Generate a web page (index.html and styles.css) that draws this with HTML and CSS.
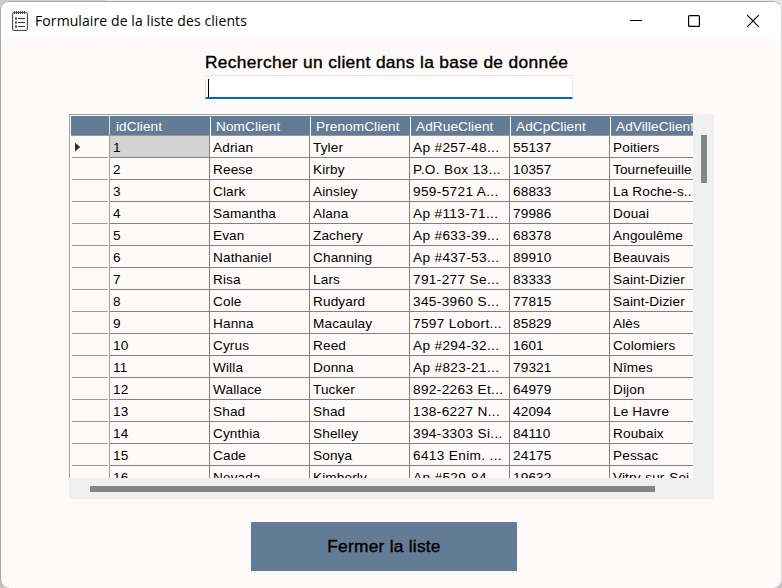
FILE: index.html
```html
<!DOCTYPE html>
<html lang="fr">
<head>
<meta charset="utf-8">
<title>Formulaire de la liste des clients</title>
<link rel="stylesheet" href="styles.css">
</head>
<body>
<div class="window">
  <header class="titlebar">
    <svg class="app-icon" width="16" height="20" viewBox="0 0 16 20" fill="none" stroke="#3c3c3c">
      <rect x=".6" y="1.6" width="14.8" height="17.8" rx="1.2"/>
      <path d="M2.5 0v3M4.5 0v3M6.5 0v3M8.5 0v3M10.5 0v3M12.5 0v3" stroke-width=".9"/>
      <path d="M6 7.5h7M6 11.5h7M6 15.5h7" stroke-width="1.2"/>
      <path d="M3 7.5h2M3 11.5h2M3 15.5h2" stroke-width="2"/>
    </svg>
    <span class="title">Formulaire de la liste des clients</span>
    <svg class="controls" width="130" height="14" viewBox="0 0 130 14" fill="none" stroke="#000">
      <path d="M0 6.5h12" stroke-width="1"/>
      <rect x="58.6" y="1.6" width="10.8" height="10.8" rx="1" stroke-width="1.2"/>
      <path d="M117.2 1.2l11.6 11.6M128.8 1.2l-11.6 11.6" stroke-width="1.2"/>
    </svg>
  </header>
  <main class="content">
    <div class="search">
      <label class="search-label">Rechercher un client dans la base de donnée</label>
      <div class="search-box"><span class="caret"></span></div>
    </div>
    <div class="data">
      <div class="viewport">
        <div class="grid">
          <div class="row head"><i></i><b>idClient</b><b>NomClient</b><b>PrenomClient</b><b>AdRueClient</b><b>AdCpClient</b><b>AdVilleClient</b></div>
          <div class="row"><i><svg width="6" height="10" viewBox="0 0 6 10"><path d="M0 .5L5.3 5L0 9.5z" fill="#333"/></svg></i><span class="selected">1</span><span>Adrian</span><span>Tyler</span><span>Ap #257-48...</span><span>55137</span><span>Poitiers</span></div>
          <div class="row"><i></i><span>2</span><span>Reese</span><span>Kirby</span><span>P.O. Box 13...</span><span>10357</span><span>Tournefeuille</span></div>
          <div class="row"><i></i><span>3</span><span>Clark</span><span>Ainsley</span><span>959-5721 A...</span><span>68833</span><span>La Roche-s...</span></div>
          <div class="row"><i></i><span>4</span><span>Samantha</span><span>Alana</span><span>Ap #113-71...</span><span>79986</span><span>Douai</span></div>
          <div class="row"><i></i><span>5</span><span>Evan</span><span>Zachery</span><span>Ap #633-39...</span><span>68378</span><span>Angoulême</span></div>
          <div class="row"><i></i><span>6</span><span>Nathaniel</span><span>Channing</span><span>Ap #437-53...</span><span>89910</span><span>Beauvais</span></div>
          <div class="row"><i></i><span>7</span><span>Risa</span><span>Lars</span><span>791-277 Se...</span><span>83333</span><span>Saint-Dizier</span></div>
          <div class="row"><i></i><span>8</span><span>Cole</span><span>Rudyard</span><span>345-3960 S...</span><span>77815</span><span>Saint-Dizier</span></div>
          <div class="row"><i></i><span>9</span><span>Hanna</span><span>Macaulay</span><span>7597 Lobort...</span><span>85829</span><span>Alès</span></div>
          <div class="row"><i></i><span>10</span><span>Cyrus</span><span>Reed</span><span>Ap #294-32...</span><span>1601</span><span>Colomiers</span></div>
          <div class="row"><i></i><span>11</span><span>Willa</span><span>Donna</span><span>Ap #823-21...</span><span>79321</span><span>Nîmes</span></div>
          <div class="row"><i></i><span>12</span><span>Wallace</span><span>Tucker</span><span>892-2263 Et...</span><span>64979</span><span>Dijon</span></div>
          <div class="row"><i></i><span>13</span><span>Shad</span><span>Shad</span><span>138-6227 N...</span><span>42094</span><span>Le Havre</span></div>
          <div class="row"><i></i><span>14</span><span>Cynthia</span><span>Shelley</span><span>394-3303 Si...</span><span>84110</span><span>Roubaix</span></div>
          <div class="row"><i></i><span>15</span><span>Cade</span><span>Sonya</span><span>6413 Enim. ...</span><span>24175</span><span>Pessac</span></div>
          <div class="row"><i></i><span>16</span><span>Nevada</span><span>Kimberly</span><span>Ap #529-84...</span><span>19632</span><span>Vitry-sur-Sei...</span></div>
        </div>
      </div>
      <div class="vscroll"><div class="vthumb"></div></div>
      <div class="hscroll"><div class="hthumb"></div></div>
    </div>
    <button class="close-list">Fermer la liste</button>
  </main>
</div>
</body>
</html>
```

FILE: styles.css
```css
* { box-sizing: border-box; }
body {
  margin: 0;
  height: 588px;
  overflow: hidden;
  background: linear-gradient(90deg, #cecece 105px, #e6e6e6 105px) top / 100% 20px no-repeat #c4c4c4;
  font-family: "Liberation Sans", Arial, sans-serif;
  color: #000;
}
.window {
  height: 587px;
  margin-top: 1px;
  border: 1px solid #a8a8a8;
  border-right-color: #dcd9d9;
  border-bottom: 0;
  border-radius: 9px;
  background: #fffafa;
  overflow: hidden;
}
.titlebar {
  display: flex;
  align-items: center;
  height: 37px;
  padding: 0 21px 0 11px;
  background: #fff;
}
.title {
  margin-left: 7px;
  font: 14px/20px "Open Sans", "Noto Sans", sans-serif;
  letter-spacing: 0.09px;
  white-space: nowrap;
}
.controls { margin-left: auto; }
.content {
  display: flex;
  flex-direction: column;
  align-items: flex-start;
}
.search { margin: 13px 0 0 204px; width: 368px; }
.search-label {
  display: block;
  height: 23px;
  font-size: 17.33px;
  line-height: 21px;
  -webkit-text-stroke: 0.4px #000;
  letter-spacing: 0.34px;
  white-space: nowrap;
}
.search-box {
  height: 24px;
  padding: 3px 2px 0;
  background: #fff;
  border: 1px solid #e8e6e6;
  border-bottom: 2px solid #0067c0;
}
.caret { display: block; width: 1px; height: 18px; background: #000; }
.data {
  display: grid;
  grid-template: 365px 20px / 625px 20px;
  margin: 15px 0 0 68px;
  background: #f0f0f0;
}
.viewport {
  margin: 0 1px 1px 0;
  border: 1px solid #a0a0a0;
  border-right: 0;
  border-bottom: 0;
  overflow: hidden;
}
.data, .viewport { min-width: 0; min-height: 0; }
.viewport { background: #fffafa; }
.grid { width: 740px; padding: 1px 0 0 1px; }
.row {
  display: grid;
  grid-template-columns: 39px repeat(6, 100px);
  height: 22px;
  font-size: 13.6px;
  line-height: 23px;
  letter-spacing: 0.13px;
}
.row span {
  height: 22px;
  padding-left: 3px;
  border-right: 1px solid #808080;
  border-bottom: 1px solid #808080;
  white-space: nowrap;
}
.row span:nth-child(5) { letter-spacing: 0.36px; }
.row i {
  position: relative;
  height: 22px;
  border-right: 1px solid #a0a0a0;
  padding: 6px 0 0 4px;
  line-height: 0;
}
.row i::after {
  content: "";
  position: absolute;
  left: 1px;
  right: 1px;
  bottom: 0;
  height: 1px;
  background: #999;
}
.row .selected { background: #d3d3d3; }
.head {
  height: 20px;
  background: #647b96;
  color: #fff;
  border-bottom: 1px solid #999;
  letter-spacing: 0.1px;
}
.row.head i { height: 19px; border-color: #ddd; }
.head i::after { display: none; }
.head b {
  position: relative;
  padding-left: 6px;
  font-weight: 400;
  line-height: 21px;
  white-space: nowrap;
}
.head b::after {
  content: "";
  position: absolute;
  right: -1px;
  top: 1px;
  bottom: 1px;
  width: 1px;
  background: #fff;
}
.vscroll { padding: 21px 0 0 7px; }
.vthumb { width: 6px; height: 48px; background: #858585; }
.hscroll { grid-column: 1 / 3; padding: 7px 0 0 21px; }
.hthumb { width: 565px; height: 6px; background: #858585; }
.close-list {
  width: 266px;
  height: 49px;
  margin: 23px 0 0 250px;
  padding: 0;
  border: 0;
  background: #647b96;
  color: #000;
  font: 17.33px/49px "Liberation Sans", Arial, sans-serif;
  -webkit-text-stroke: 0.4px #000;
  letter-spacing: 0.25px;
}
```
